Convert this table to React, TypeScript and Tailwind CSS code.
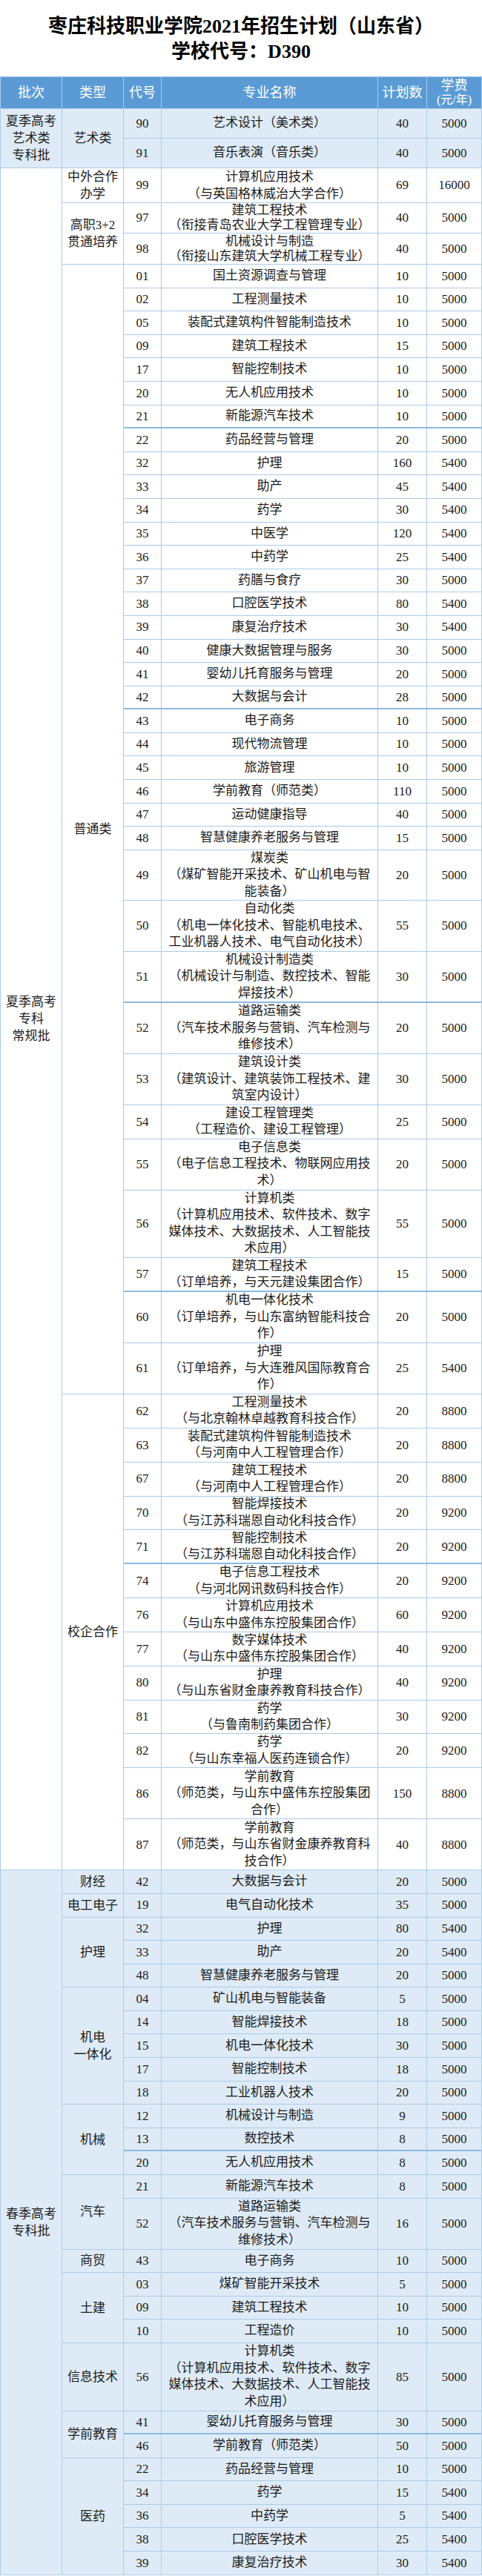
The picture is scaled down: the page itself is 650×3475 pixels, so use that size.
import React from "react";

type Row = {
  code: string;
  name: string[];
  count: string;
  fee: string;
  h?: string;
  hLast?: string;
  lead?: string;
  thick?: boolean;
};
type Group = { type: string[]; rows: Row[] };
type Section = { batch: string[]; tint: boolean; groups: Group[] };

const r = (code: string, name: string | string[], count: string | number, fee: string | number, extra: Partial<Row> = {}): Row => ({
  code,
  name: Array.isArray(name) ? name : [name],
  count: String(count),
  fee: String(fee),
  ...extra,
});

const sections: Section[] = [
  {
    batch: ["夏季高考", "艺术类", "专科批"],
    tint: true,
    groups: [
      {
        type: ["艺术类"],
        rows: [
          r("90", "艺术设计（美术类）", 40, 5000, { h: "h-[40px]" }),
          r("91", "音乐表演（音乐类）", 40, 5000, { hLast: "h-[39px]" }),
        ],
      },
    ],
  },
  {
    batch: ["夏季高考", "专科", "常规批"],
    tint: false,
    groups: [
      {
        type: ["中外合作", "办学"],
        rows: [r("99", ["计算机应用技术", "（与英国格林威治大学合作）"], 69, 16000, { hLast: "h-[45px]", lead: "leading-[23px]" })],
      },
      {
        type: ["高职3+2", "贯通培养"],
        rows: [
          r("97", ["建筑工程技术", "（衔接青岛农业大学工程管理专业）"], 40, 5000, { h: "h-[41px]", lead: "leading-[20px]" }),
          r("98", ["机械设计与制造", "（衔接山东建筑大学机械工程专业）"], 40, 5000, { hLast: "h-[41px]", lead: "leading-[20px]" }),
        ],
      },
      {
        type: ["普通类"],
        rows: [
          r("01", "国土资源调查与管理", 10, 5000),
          r("02", "工程测量技术", 10, 5000),
          r("05", "装配式建筑构件智能制造技术", 10, 5000),
          r("09", "建筑工程技术", 15, 5000),
          r("17", "智能控制技术", 10, 5000),
          r("20", "无人机应用技术", 10, 5000),
          r("21", "新能源汽车技术", 10, 5000, { thick: true }),
          r("22", "药品经营与管理", 20, 5000),
          r("32", "护理", 160, 5400),
          r("33", "助产", 45, 5400),
          r("34", "药学", 30, 5400),
          r("35", "中医学", 120, 5400),
          r("36", "中药学", 25, 5400),
          r("37", "药膳与食疗", 30, 5000),
          r("38", "口腔医学技术", 80, 5400),
          r("39", "康复治疗技术", 30, 5400),
          r("40", "健康大数据管理与服务", 30, 5000),
          r("41", "婴幼儿托育服务与管理", 20, 5000),
          r("42", "大数据与会计", 28, 5000, { thick: true }),
          r("43", "电子商务", 10, 5000),
          r("44", "现代物流管理", 10, 5000),
          r("45", "旅游管理", 10, 5000),
          r("46", "学前教育（师范类）", 110, 5000),
          r("47", "运动健康指导", 40, 5000),
          r("48", "智慧健康养老服务与管理", 15, 5000),
          r("49", ["煤炭类", "（煤矿智能开采技术、矿山机电与智", "能装备）"], 20, 5000, { h: "h-[68px]" }),
          r("50", ["自动化类", "（机电一体化技术、智能机电技术、", "工业机器人技术、电气自动化技术）"], 55, 5000),
          r("51", ["机械设计制造类", "（机械设计与制造、数控技术、智能", "焊接技术）"], 30, 5000, { thick: true }),
          r("52", ["道路运输类", "（汽车技术服务与营销、汽车检测与", "维修技术）"], 20, 5000),
          r("53", ["建筑设计类", "（建筑设计、建筑装饰工程技术、建", "筑室内设计）"], 30, 5000),
          r("54", ["建设工程管理类", "（工程造价、建设工程管理）"], 25, 5000),
          r("55", ["电子信息类", "（电子信息工程技术、物联网应用技", "术）"], 20, 5000),
          r("56", ["计算机类", "（计算机应用技术、软件技术、数字", "媒体技术、大数据技术、人工智能技", "术应用）"], 55, 5000),
          r("57", ["建筑工程技术", "（订单培养，与天元建设集团合作）"], 15, 5000, { thick: true }),
          r("60", ["机电一体化技术", "（订单培养，与山东富纳智能科技合", "作）"], 20, 5000),
          r("61", ["护理", "（订单培养，与大连雅风国际教育合", "作）"], 25, 5400),
        ],
      },
      {
        type: ["校企合作"],
        rows: [
          r("62", ["工程测量技术", "（与北京翰林卓越教育科技合作）"], 20, 8800),
          r("63", ["装配式建筑构件智能制造技术", "（与河南中人工程管理合作）"], 20, 8800),
          r("67", ["建筑工程技术", "（与河南中人工程管理合作）"], 20, 8800),
          r("70", ["智能焊接技术", "（与江苏科瑞恩自动化科技合作）"], 20, 9200),
          r("71", ["智能控制技术", "（与江苏科瑞恩自动化科技合作）"], 20, 9200, { thick: true }),
          r("74", ["电子信息工程技术", "（与河北网讯数码科技合作）"], 20, 9200),
          r("76", ["计算机应用技术", "（与山东中盛伟东控股集团合作）"], 60, 9200),
          r("77", ["数字媒体技术", "（与山东中盛伟东控股集团合作）"], 40, 9200),
          r("80", ["护理", "（与山东省财金康养教育科技合作）"], 40, 9200),
          r("81", ["药学", "（与鲁南制药集团合作）"], 30, 9200),
          r("82", ["药学", "（与山东幸福人医药连锁合作）"], 20, 9200),
          r("86", ["学前教育", "（师范类，与山东中盛伟东控股集团", "合作）"], 150, 8800),
          r("87", ["学前教育", "（师范类，与山东省财金康养教育科", "技合作）"], 40, 8800),
        ],
      },
    ],
  },
  {
    batch: ["春季高考", "专科批"],
    tint: true,
    groups: [
      { type: ["财经"], rows: [r("42", "大数据与会计", 20, 5000)] },
      { type: ["电工电子"], rows: [r("19", "电气自动化技术", 35, 5000)] },
      {
        type: ["护理"],
        rows: [
          r("32", "护理", 80, 5400),
          r("33", "助产", 20, 5400),
          r("48", "智慧健康养老服务与管理", 20, 5000),
        ],
      },
      {
        type: ["机电", "一体化"],
        rows: [
          r("04", "矿山机电与智能装备", 5, 5000),
          r("14", "智能焊接技术", 18, 5000),
          r("15", "机电一体化技术", 30, 5000),
          r("17", "智能控制技术", 18, 5000),
          r("18", "工业机器人技术", 20, 5000),
        ],
      },
      {
        type: ["机械"],
        rows: [
          r("12", "机械设计与制造", 9, 5000),
          r("13", "数控技术", 8, 5000, { thick: true }),
          r("20", "无人机应用技术", 8, 5000),
        ],
      },
      {
        type: ["汽车"],
        rows: [
          r("21", "新能源汽车技术", 8, 5000),
          r("52", ["道路运输类", "（汽车技术服务与营销、汽车检测与", "维修技术）"], 16, 5000),
        ],
      },
      { type: ["商贸"], rows: [r("43", "电子商务", 10, 5000)] },
      {
        type: ["土建"],
        rows: [
          r("03", "煤矿智能开采技术", 5, 5000),
          r("09", "建筑工程技术", 10, 5000),
          r("10", "工程造价", 10, 5000),
        ],
      },
      {
        type: ["信息技术"],
        rows: [r("56", ["计算机类", "（计算机应用技术、软件技术、数字", "媒体技术、大数据技术、人工智能技", "术应用）"], 85, 5000)],
      },
      {
        type: ["学前教育"],
        rows: [
          r("41", "婴幼儿托育服务与管理", 30, 5000, { thick: true }),
          r("46", "学前教育（师范类）", 50, 5000),
        ],
      },
      {
        type: ["医药"],
        rows: [
          r("22", "药品经营与管理", 10, 5000),
          r("34", "药学", 15, 5400),
          r("36", "中药学", 5, 5400),
          r("38", "口腔医学技术", 25, 5400),
          r("39", "康复治疗技术", 30, 5400),
        ],
      },
    ],
  },
];

// row height follows the number of text lines; the last row of a group
// gives 1px to the group's own bottom border
const heightFor = (row: Row, last: boolean) => {
  if (last && row.hLast) return row.hLast;
  if (!last && row.h) return row.h;
  const n = row.name.length;
  if (last) {
    if (n === 1) return "h-[30.6px]";
    if (n === 2) return "h-[44.85px]";
    if (n === 3) return "h-[68px]";
    return "h-[90.5px]";
  }
  if (n === 1) return "h-[31.6px]";
  if (n === 2) return "h-[45.85px]";
  if (n === 3) return "h-[69px]";
  return "h-[91.5px]";
};

function PlanRow({ row, last }: { row: Row; last: boolean }) {
  const edge = last ? "" : row.thick ? "border-b-2 border-[#8db8e2]" : "border-b border-[#a9cbea]";
  return (
    <div className={`flex ${heightFor(row, last)} ${edge}`}>
      <div className="w-[51px] shrink-0 border-r border-[#a9cbea] flex items-center justify-center">
        {row.code}
      </div>
      <div className={`w-[292px] shrink-0 border-r border-[#a9cbea] flex flex-col items-center justify-center text-center ${row.lead ?? "leading-[22.5px]"}`}>
        {row.name.map((line, i) => (
          <span key={i} className="whitespace-nowrap">
            {line}
          </span>
        ))}
      </div>
      <div className="w-[66px] shrink-0 border-r border-[#a9cbea] flex items-center justify-center">
        {row.count}
      </div>
      <div className="flex-1 flex items-center justify-center">{row.fee}</div>
    </div>
  );
}

export default function App() {
  return (
    <div className="w-[650px] min-h-[3475px] bg-white text-[#1c1c1c] font-['Liberation_Serif','Noto_Sans_CJK_SC',serif]">
      {/* Title */}
      <div className="pt-[19px] pb-[16px] text-center text-[26px] font-bold leading-[34px] text-black">
        <div>枣庄科技职业学院2021年招生计划（山东省）</div>
        <div>学校代号：D390</div>
      </div>

      {/* Table */}
      <div className="border border-[#a9cbea] text-[17px]">
        {/* Header */}
        <div className="flex h-[43px] bg-[#5b9bd5] text-white text-[18px] border-b border-[#a9cbea]">
          <div className="w-[83px] shrink-0 border-r border-[#a9cbea] flex items-center justify-center">批次</div>
          <div className="w-[83px] shrink-0 border-r border-[#a9cbea] flex items-center justify-center">类型</div>
          <div className="w-[51px] shrink-0 border-r border-[#a9cbea] flex items-center justify-center">代号</div>
          <div className="w-[292px] shrink-0 border-r border-[#a9cbea] flex items-center justify-center">专业名称</div>
          <div className="w-[66px] shrink-0 border-r border-[#a9cbea] flex items-center justify-center">计划数</div>
          <div className="flex-1 flex flex-col items-center justify-center leading-[20px]">
            <span>学费</span>
            <span className="text-[16px]">(元/年)</span>
          </div>
        </div>

        {sections.map((section, si) => (
          <div
            key={si}
            className={`flex ${section.tint ? "bg-[#deebf7]" : "bg-white"} ${si < sections.length - 1 ? "border-b border-[#a9cbea]" : ""}`}
          >
            <div className="w-[83px] shrink-0 border-r border-[#a9cbea] flex flex-col items-center justify-center leading-[23px]">
              {section.batch.map((line) => (
                <span key={line}>{line}</span>
              ))}
            </div>
            <div className="flex-1 flex flex-col">
              {section.groups.map((group, gi) => (
                <div
                  key={gi}
                  className={`flex ${gi < section.groups.length - 1 ? "border-b border-[#a9cbea]" : ""}`}
                >
                  <div className="w-[83px] shrink-0 border-r border-[#a9cbea] flex flex-col items-center justify-center leading-[23px]">
                    {group.type.map((line) => (
                      <span key={line} className="whitespace-nowrap">
                        {line}
                      </span>
                    ))}
                  </div>
                  <div className="flex-1 flex flex-col">
                    {group.rows.map((row, ri) => (
                      <PlanRow key={row.code + ri} row={row} last={ri === group.rows.length - 1} />
                    ))}
                  </div>
                </div>
              ))}
            </div>
          </div>
        ))}
      </div>
    </div>
  );
}
